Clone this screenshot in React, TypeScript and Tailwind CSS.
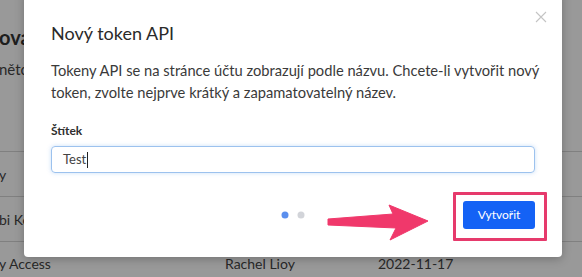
import React from "react";

export default function App() {
  return (
    <div
      className="relative w-[582px] h-[277px] overflow-hidden bg-white"
      style={{ fontFamily: "Lato, 'Noto Sans', sans-serif" }}
    >
      {/* background page */}
      <div className="ml-[-1px] flex flex-col text-[#444]">
        <div className="h-[24px]" />
        <div className="text-[20px] leading-[26px] font-bold text-[#333] whitespace-nowrap">ova</div>
        <div className="mt-[8px] text-[15px] leading-[22px] whitespace-nowrap">nětc</div>
        <div className="mt-[71px] border-t border-[#d5d5d5]" />
        <div className="grid grid-cols-[226px_153px_1fr] h-[45px] items-center text-[14px] border-b border-[#d5d5d5]">
          <span>y</span>
          <span></span>
          <span></span>
        </div>
        <div className="grid grid-cols-[226px_153px_1fr] h-[45px] items-center text-[14px] border-b border-[#d5d5d5]">
          <span className="whitespace-nowrap">bi Ke</span>
          <span></span>
          <span></span>
        </div>
        <div className="grid grid-cols-[226px_153px_1fr] h-[45px] items-center text-[14px] pb-[2px]">
          <span className="whitespace-nowrap">y Access</span>
          <span className="whitespace-nowrap">Rachel Lioy</span>
          <span className="whitespace-nowrap">2022-11-17</span>
        </div>
      </div>

      {/* overlay */}
      <div className="absolute inset-0 bg-black/40" />

      {/* modal */}
      <div className="absolute left-[24px] top-[-10px] w-[538px] h-[267px] bg-white rounded-[4px] shadow-[0_2px_10px_rgba(0,0,0,0.25)] px-[27px] pt-[29px]">
        <button className="absolute right-[15px] top-[21px] w-[12px] h-[12px] text-[#c4c4c4]">
          <svg viewBox="0 0 12 12" width="12" height="12" fill="none" stroke="currentColor" strokeWidth="1.1">
            <path d="M1 1 L11 11 M11 1 L1 11" />
          </svg>
        </button>
        <div className="text-[18px] leading-[28px] text-[#2a2a2a]">Nový token API</div>
        <p className="mt-[12px] mr-[-20px] text-[14.7px] leading-[22px] text-[#3a3a3a]">
          Tokeny API se na stránce účtu zobrazují podle názvu. Chcete-li vytvořit nový token, zvolte nejprve krátký a zapamatovatelný název.
        </p>
        <div className="mt-[19px] text-[12px] leading-[18px] font-bold text-[#2f2f2f]">Štítek</div>
        <div className="mt-[6px] h-[27px] rounded-[4px] border border-[#9cc2ee] shadow-[0_0_4px_rgba(100,160,230,0.35)] flex items-center pl-[11px] text-[13px] text-[#444]">
          <span>Test</span>
          <span className="ml-[1px] w-px h-[16px] bg-[#222]" />
        </div>
        <div className="relative mt-[28px] h-[28px] flex items-center justify-end">
          <div className="absolute left-1/2 top-1/2 -translate-x-1/2 -translate-y-1/2 flex gap-[9px] items-center">
            <span className="w-[7px] h-[7px] rounded-full bg-[#5b8fee]" />
            <span className="w-[7px] h-[7px] rounded-full bg-[#d2d4d9]" />
          </div>
          <button className="relative w-[72px] h-[28px] rounded-[3px] bg-[#1462f5] text-white text-[12px]">
            Vytvořit
            <span className="absolute left-[-10px] top-[-9px] w-[94px] h-[49px] border-[3px] border-[#e63a6c] rounded-[1px]" />
          </button>
        </div>
      </div>

      {/* arrow */}
      <svg className="absolute left-0 top-0" width="582" height="277" viewBox="0 0 582 277">
        <polygon
          points="328,219 393,214 389,205 428,221 390,240 396,228 328,225"
          fill="#f0386b"
          stroke="#f0386b"
          strokeLinejoin="round"
          strokeWidth="1"
        />
      </svg>
    </div>
  );
}
